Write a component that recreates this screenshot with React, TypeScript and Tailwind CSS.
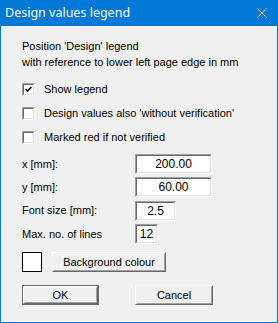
import React from "react";

const body = { fontFamily: '"Liberation Sans", Arial, sans-serif' };

function Checkbox({ checked, label }: { checked?: boolean; label: string }) {
  return (
    <div className="flex h-[24px] items-center">
      <div className="h-[13px] w-[13px] border border-t-[#a0a0a0] border-l-[#a0a0a0] border-r-white border-b-white">
        <div className="h-full w-full border border-t-[#696969] border-l-[#696969] border-r-[#e3e3e3] border-b-[#e3e3e3] bg-white">
          {checked && (
            <svg width="9" height="9" viewBox="0 0 9 9" className="block">
              <path d="M1.5 4 L3.5 6 L7.5 2" stroke="#000" strokeWidth="1.7" fill="none" />
            </svg>
          )}
        </div>
      </div>
      <span className="ml-[9px] text-[11px] text-black">{label}</span>
    </div>
  );
}

function Field({ label, value, width }: { label: string; value: string; width: string }) {
  return (
    <div className="flex h-[20px] items-center">
      <span className="w-[113px] text-[11px] text-black">{label}</span>
      <div className={`h-[20px] ${width} border border-t-[#a0a0a0] border-l-[#a0a0a0] border-r-white border-b-white`}>
        <div className="flex h-full w-full items-center justify-center border border-t-[#696969] border-l-[#696969] border-r-[#e3e3e3] border-b-[#e3e3e3] bg-white text-[12px] text-black">
          {value}
        </div>
      </div>
    </div>
  );
}

function Button({ label, width, isDefault }: { label: string; width: string; isDefault?: boolean }) {
  return (
    <div className={`h-[20px] ${width} ${isDefault ? "border border-[#6a6a6a]" : ""}`}>
      <div className="h-full w-full border border-t-white border-l-white border-r-[#696969] border-b-[#696969]">
        <div className="flex h-full w-full items-center justify-center border border-t-[#f0f0f0] border-l-[#f0f0f0] border-r-[#a0a0a0] border-b-[#a0a0a0] bg-[#f0f0f0] text-[11px] text-black">
          {label}
        </div>
      </div>
    </div>
  );
}

export default function App() {
  return (
    <div className="flex h-[323px] w-[278px] flex-col border-x border-b border-[#0078d7] bg-[#f0f0f0]" style={body}>
      <div className="flex h-[26px] shrink-0 items-center justify-between bg-[#0078d7] pl-[4px] pr-[10px]">
        <span className="text-[12.5px] text-white" style={{ fontFamily: '"Noto Sans", sans-serif' }}>
          Design values legend
        </span>
        <svg width="10" height="10" viewBox="0 0 10 10">
          <path d="M0.5 0.5 L9.5 9.5 M9.5 0.5 L0.5 9.5" stroke="#fff" strokeWidth="1" />
        </svg>
      </div>

      <div className="flex flex-col pl-[21px] pt-[12px]">
        <div className="text-[11px] leading-[16px] text-black">
          <div>Position 'Design' legend</div>
          <div>with reference to lower left page edge in mm</div>
        </div>

        <div className="mt-[7px] flex flex-col">
          <Checkbox checked label="Show legend" />
          <Checkbox label="Design values also 'without verification'" />
          <Checkbox label="Marked red if not verified" />
        </div>

        <div className="mt-[5px] flex flex-col gap-[3.3px]">
          <Field label="x [mm]:" value="200.00" width="w-[77px]" />
          <Field label="y [mm]:" value="60.00" width="w-[77px]" />
          <Field label="Font size [mm]:" value="2.5" width="w-[41px]" />
          <Field label="Max. no. of lines" value="12" width="w-[23px]" />
        </div>

        <div className="mt-[8px] flex items-start">
          <div className="h-[20px] w-[20px] border border-black bg-white" />
          <div className="ml-[10px]">
            <Button label="Background colour" width="w-[114px]" />
          </div>
        </div>

        <div className="mt-[13px] flex">
          <Button label="OK" width="w-[77px]" isDefault />
          <div className="ml-[36px]">
            <Button label="Cancel" width="w-[78px]" />
          </div>
        </div>
      </div>
    </div>
  );
}
